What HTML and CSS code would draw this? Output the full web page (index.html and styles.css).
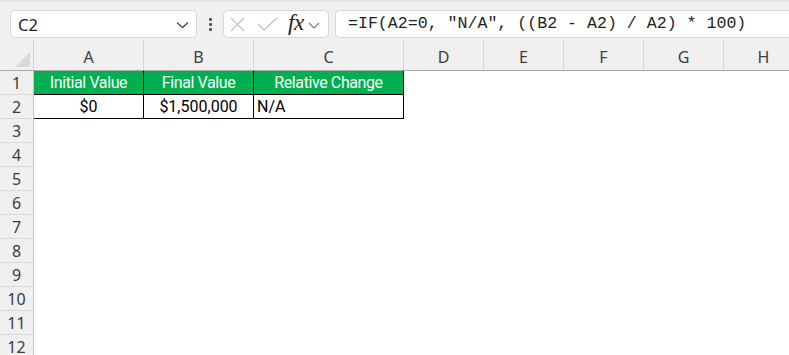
FILE: index.html
```html
<!DOCTYPE html>
<html>
<head>
<meta charset="utf-8">
<link rel="stylesheet" href="styles.css">
</head>
<body>
<div class="app">
  <div class="toolbar">
    <div class="namebox">
      <span class="nb-text">C2</span>
      <svg class="nb-chev" width="13" height="8" viewBox="0 0 13 8"><path d="M1 1.5 L6.5 6.5 L12 1.5" fill="none" stroke="#444" stroke-width="1.3"/></svg>
    </div>
    <div class="dots"><span></span><span></span><span></span></div>
    <div class="fxgroup">
      <svg class="ic-x" width="15" height="15" viewBox="0 0 15 15"><path d="M1 1 L14 14 M14 1 L1 14" stroke="#c4c4c4" stroke-width="1.3" fill="none"/></svg>
      <svg class="ic-ok" width="21" height="14" viewBox="0 0 21 14"><path d="M1 7 L7 13 L20 1" stroke="#c4c4c4" stroke-width="1.3" fill="none"/></svg>
      <span class="fx">fx</span>
      <svg class="ic-chev" width="12" height="7" viewBox="0 0 12 7"><path d="M1 1 L6 6 L11 1" fill="none" stroke="#777" stroke-width="1.1"/></svg>
    </div>
    <div class="formula">=IF(A2=0, "N/A", ((B2 - A2) / A2) * 100)</div>
  </div>

  <div class="sheet">
    <div class="row colhead">
      <div class="corner"><span class="tri"></span></div>
      <div class="ch">A</div><div class="ch">B</div><div class="ch">C</div><div class="ch">D</div>
      <div class="ch">E</div><div class="ch">F</div><div class="ch">G</div><div class="ch">H</div>
    </div>
    <div class="row">
      <div class="rh">1</div>
      <div class="c hd">Initial Value</div><div class="c hd">Final Value</div><div class="c hd">Relative Change</div>
      <div class="c"></div><div class="c"></div><div class="c"></div><div class="c"></div><div class="c"></div>
    </div>
    <div class="row">
      <div class="rh">2</div>
      <div class="c bd center">$0</div><div class="c bd center">$1,500,000</div><div class="c bd left">N/A</div>
      <div class="c"></div><div class="c"></div><div class="c"></div><div class="c"></div><div class="c"></div>
    </div>
    <div class="row"><div class="rh">3</div></div>
    <div class="row"><div class="rh">4</div></div>
    <div class="row"><div class="rh">5</div></div>
    <div class="row"><div class="rh">6</div></div>
    <div class="row"><div class="rh">7</div></div>
    <div class="row"><div class="rh">8</div></div>
    <div class="row"><div class="rh">9</div></div>
    <div class="row"><div class="rh">10</div></div>
    <div class="row"><div class="rh">11</div></div>
    <div class="row"><div class="rh">12</div></div>
  </div>
</div>
</body>
</html>
```
FILE: styles.css
```css
html, body {
  margin: 0;
  padding: 0;
  background: #ffffff;
  overflow: hidden;
}
.app {
  width: 789px;
  height: 355px;
  overflow: hidden;
}
.toolbar {
  height: 40px;
  box-sizing: border-box;
  background: #f0f0f0;
  border-top: 2px solid #e3e3e3;
  padding: 8px 0 0 10px;
  display: flex;
  align-items: flex-start;
}
.namebox {
  width: 187px;
  height: 28px;
  box-sizing: border-box;
  background: #fff;
  border: 1px solid #d6d6d6;
  border-radius: 5px;
  display: flex;
  align-items: center;
  justify-content: space-between;
  padding: 0 7px 0 7px;
  font-family: "Noto Sans", "Open Sans", sans-serif;
  font-size: 16.5px;
  color: #222;
}
.nb-chev { margin-top: 2px; }
.dots {
  width: 26px;
  height: 28px;
  display: flex;
  flex-direction: column;
  align-items: center;
  justify-content: center;
  gap: 2px;
}
.dots span {
  width: 3px;
  height: 3px;
  background: #555;
  border-radius: 1px;
}
.fxgroup {
  width: 106px;
  height: 28px;
  box-sizing: border-box;
  background: #fff;
  border: 1px solid #d6d6d6;
  border-radius: 5px;
  display: flex;
  align-items: center;
  padding-left: 6px;
}
.ic-x { margin-right: 12px; }
.ic-ok { margin-right: 10px; }
.fx {
  font-family: "Liberation Serif", "DejaVu Serif", serif;
  font-style: italic;
  font-size: 23px;
  color: #222;
  margin-right: 4px;
  margin-top: -3px;
  letter-spacing: -0.5px;
}
.ic-chev { margin-top: 2px; }
.formula {
  flex: 1;
  margin-left: 6px;
  height: 28px;
  box-sizing: border-box;
  background: #fff;
  border: 1px solid #d6d6d6;
  border-right: none;
  border-radius: 5px 0 0 5px;
  padding-left: 12px;
  font-family: "Liberation Mono", "DejaVu Sans Mono", monospace;
  font-size: 16.6px;
  line-height: 26px;
  color: #1f1f1f;
  white-space: nowrap;
}
.sheet {
  background: #fff;
}
.row {
  display: grid;
  grid-template-columns: 34px 110px 110px 150px 80px 80px 80px 80px 80px;
  height: 24px;
}
.colhead {
  height: 31px;
  background: #f0f0f0;
  border-bottom: 1px solid #a8a8a8;
  box-sizing: border-box;
}
.corner {
  position: relative;
  border-right: 1px solid #d4d4d4;
}
.tri {
  position: absolute;
  right: 3px;
  bottom: 3px;
  width: 0;
  height: 0;
  border-left: 15px solid transparent;
  border-bottom: 15px solid #d9d9d9;
}
.ch {
  border-right: 1px solid #d7d7d7;
  display: flex;
  align-items: flex-end;
  justify-content: center;
  padding-bottom: 2px;
  font-family: "Noto Sans", "Open Sans", sans-serif;
  font-size: 16px;
  color: #3c3c3c;
}
.rh {
  background: #f0f0f0;
  border-right: 1px solid #c4c4c4;
  border-bottom: 1px solid #d9d9d9;
  display: flex;
  align-items: center;
  justify-content: center;
  font-family: "Noto Sans", "Open Sans", sans-serif;
  font-size: 16px;
  color: #3c3c3c;
  box-sizing: border-box;
}
.c {
  box-sizing: border-box;
  font-family: Roboto, "Liberation Sans", sans-serif;
  font-size: 16px;
  display: flex;
  align-items: center;
}
.hd {
  background: #00b050;
  color: #fff;
  justify-content: center;
  border-right: 1px solid #000;
  border-bottom: 1px solid #000;
  letter-spacing: -0.4px;
}
.bd {
  color: #000;
  border-right: 1px solid #000;
  border-bottom: 1px solid #000;
}
.center { justify-content: center; }
.left { padding-left: 3px; }
```
